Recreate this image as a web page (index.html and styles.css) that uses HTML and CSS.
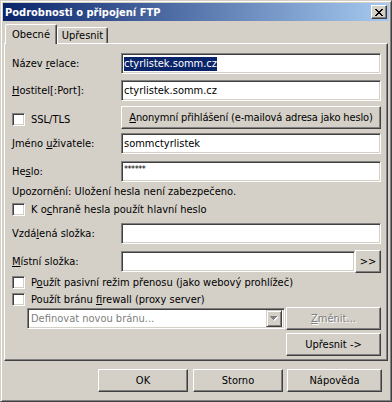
FILE: index.html
```html
<!DOCTYPE html>
<html>
<head>
<meta charset="utf-8">
<link rel="stylesheet" href="styles.css">
</head>
<body>
<div class="window">
  <div class="titlebar">
    <span class="title">Podrobnosti o připojení FTP</span>
    <div class="close">
      <svg width="8" height="7" viewBox="0 0 8 7" shape-rendering="crispEdges"><path d="M0 0h2v1H0z M6 0h2v1H6z M1 1h2v1H1z M5 1h2v1H5z M2 2h4v1H2z M3 3h2v1H3z M2 4h4v1H2z M1 5h2v1H1z M5 5h2v1H5z M0 6h2v1H0z M6 6h2v1H6z" fill="#000"/></svg>
    </div>
  </div>
  <div class="content">
    <div class="tabs">
      <div class="tab active">Obecné</div>
      <div class="tab">Upřesnit</div>
    </div>
    <div class="panel">
      <div class="row r1">
        <div class="lbl">Název <u>r</u>elace:</div>
        <div class="field"><span class="sel">ctyrlistek.somm.cz</span></div>
      </div>
      <div class="row r2">
        <div class="lbl"><u>H</u>ostitel[:Port]:</div>
        <div class="field">ctyrlistek.somm.cz</div>
      </div>
      <div class="row r3">
        <div class="lbl lbl-check"><span class="cb"></span><span>SSL/TLS</span></div>
        <div class="btn grow anon"><span><u>A</u>nonymní přihlášení (e-mailová adresa jako heslo)</span></div>
      </div>
      <div class="row r4">
        <div class="lbl">Jméno <u>u</u>živatele:</div>
        <div class="field">sommctyrlistek</div>
      </div>
      <div class="row r5">
        <div class="lbl">He<u>s</u>lo:</div>
        <div class="field pwd"><span class="stars">******</span></div>
      </div>
      <div class="note">Upozornění: Uložení hesla není zabezpečeno.</div>
      <div class="check c1"><span class="cb"></span><span>K o<u>c</u>hraně hesla použít hlavní heslo</span></div>
      <div class="row r8">
        <div class="lbl">Vzdá<u>l</u>ená složka:</div>
        <div class="field"></div>
      </div>
      <div class="row r9">
        <div class="lbl"><u>M</u>ístní složka:</div>
        <div class="field"></div>
        <div class="btn browse">&gt;&gt;</div>
      </div>
      <div class="check c2"><span class="cb"></span><span>P<u>o</u>užít pasivní režim přenosu (jako webový prohlížeč)</span></div>
      <div class="check c3"><span class="cb"></span><span>Použít bránu <u>f</u>irewall (proxy server)</span></div>
      <div class="row r12">
        <div class="combo">
          <span class="combo-text">Definovat novou bránu...</span>
          <span class="combo-btn">
            <svg width="8" height="5" viewBox="0 0 8 5" shape-rendering="crispEdges"><path d="M1 1h7v1H1z M2 2h5v1H2z M3 3h3v1H3z M4 4h1v1H4z" fill="#fff"/><path d="M0 0h7v1H0z M1 1h5v1H1z M2 2h3v1H2z M3 3h1v1H3z" fill="#808080"/></svg>
          </span>
        </div>
        <div class="btn side disabled"><span><u>Z</u>měnit...</span></div>
      </div>
      <div class="row r13">
        <div class="btn side">Upřesnit -&gt;</div>
      </div>
    </div>
    <div class="buttons">
      <div class="btn bottom ok">OK</div>
      <div class="btn bottom storno">Storno</div>
      <div class="btn bottom help">Nápověda</div>
    </div>
  </div>
</div>
</body>
</html>
```
FILE: styles.css
```css
* { box-sizing: border-box; }
html, body { margin: 0; padding: 0; }
body {
  width: 392px;
  height: 402px;
  background: #d4d0c8;
  font-family: "DejaVu Sans Condensed", "DejaVu Sans", sans-serif;
  font-stretch: condensed;
  font-size: 11px;
  color: #000;
}
u { text-decoration: underline; text-underline-offset: 1px; }

.window {
  width: 392px;
  height: 402px;
  background: #d4d0c8;
  border: 1px solid;
  border-color: #d4d0c8 #404040 #404040 #d4d0c8;
  box-shadow: inset 1px 1px #fff, inset -1px -1px #808080;
  padding: 2px;
}

.titlebar {
  height: 18px;
  display: flex;
  align-items: center;
  justify-content: space-between;
  padding: 0 2px;
  background: linear-gradient(to right, #0a246a, #a6caf0);
  color: #fff;
  font-weight: bold;
}
.close {
  width: 16px;
  height: 14px;
  background: #d4d0c8;
  border: 1px solid;
  border-color: #fff #404040 #404040 #fff;
  box-shadow: inset -1px -1px #808080;
  display: flex;
  align-items: center;
  justify-content: center;
}

.content { padding: 3px 1px 0 1px; }

.tabs {
  display: flex;
  align-items: flex-end;
  height: 20px;
  margin: 0 0 -1px 1px;
  position: relative;
  z-index: 1;
}
.tab {
  width: 51px;
  height: 16px;
  margin-bottom: 1px;
  border: 1px solid;
  border-bottom: none;
  border-color: #fff #404040 transparent #fff;
  border-radius: 2px 2px 0 0;
  box-shadow: inset -1px 0 #808080;
  background: #d4d0c8;
  display: flex;
  align-items: center;
  justify-content: center;
}
.tab.active {
  width: 52px;
  height: 20px;
  margin-bottom: 0;
  padding-bottom: 1px;
}

.panel {
  height: 318px;
  border: 1px solid;
  border-color: #fff #404040 #404040 #fff;
  box-shadow: inset -1px -1px #808080;
  padding: 9px 6px 0 7px;
}

.row { display: flex; align-items: center; height: 21px; }
.lbl { width: 109px; flex: none; white-space: nowrap; }
.lbl-check { display: flex; align-items: center; align-self: flex-start; padding-top: 7px; }

.field, .cb, .combo {
  border: 1px solid;
  border-color: #808080 #fff #fff #808080;
  box-shadow: inset 1px 1px #404040, inset -1px -1px #d4d0c8;
  background: #fff;
}
.field {
  flex: 1;
  height: 21px;
  padding: 0 2px;
  display: flex;
  align-items: center;
  white-space: nowrap;
  overflow: hidden;
}
.sel { background: #0a246a; color: #fff; line-height: 14px; }
.pwd { align-items: flex-start; }
.stars { font-size: 9px; line-height: 9px; margin-top: 3px; letter-spacing: -0.5px; }

.btn {
  height: 23px;
  border: 1px solid;
  border-color: #fff #404040 #404040 #fff;
  box-shadow: inset -1px -1px #808080;
  background: #d4d0c8;
  display: flex;
  align-items: center;
  justify-content: center;
  white-space: nowrap;
}
.grow { flex: 1; }
.anon { letter-spacing: -0.15px; }
.browse { width: 26px; flex: none; }
.side { width: 95px; flex: none; margin-left: auto; }
.disabled { color: #808080; text-shadow: 1px 1px #fff; }

.r1 { margin-top: 0; }
.r2 { margin-top: 6px; }
.r3 { margin-top: 5px; height: 23px; }
.r4 { margin-top: 4px; }
.r5 { margin-top: 7px; }
.note { margin-top: 3px; line-height: 13px; white-space: nowrap; }
.check { display: flex; align-items: center; height: 13px; white-space: nowrap; }
.cb { width: 13px; height: 13px; flex: none; margin-right: 6px; }
.c1 { margin-top: 5px; }
.r8 { margin-top: 7px; }
.r9 { margin-top: 6px; height: 23px; }
.c2 { margin-top: 3px; }
.c3 { margin-top: 4px; }
.r12 { margin-top: 1px; height: 23px; }
.r13 { margin-top: 3px; height: 23px; }

.combo {
  width: 258px;
  height: 21px;
  margin-left: 15px;
  display: flex;
  align-items: center;
  padding: 2px;
}
.combo-text { flex: 1; color: #808080; padding-left: 1px; white-space: nowrap; overflow: hidden; }
.combo-btn {
  width: 16px;
  height: 17px;
  flex: none;
  border: 1px solid;
  border-color: #d4d0c8 #404040 #404040 #d4d0c8;
  box-shadow: inset 1px 1px #fff, inset -1px -1px #808080;
  background: #d4d0c8;
  display: flex;
  align-items: center;
  justify-content: center;
}

.buttons {
  display: flex;
  justify-content: flex-end;
  margin-top: 8px;
  padding-right: 6px;
}
.bottom { width: 90px; }
.ok { margin-right: 5px; }
.storno { margin-right: 4px; }
.help { width: 95px; }
```
